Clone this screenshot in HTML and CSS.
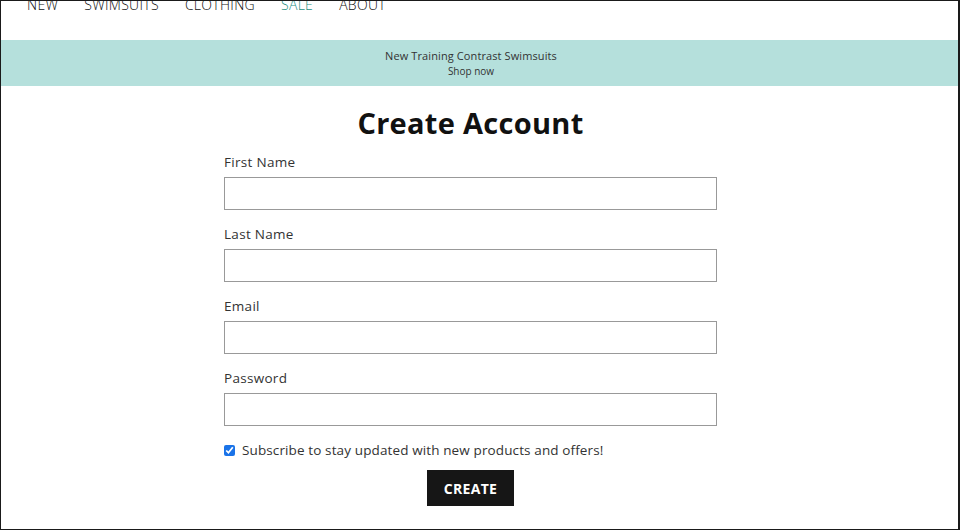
FILE: index.html
```html
<!DOCTYPE html>
<html>
<head>
<meta charset="utf-8">
<link rel="stylesheet" href="styles.css">
</head>
<body>
<div class="frame">
  <nav class="nav">
    <a class="nav-link" href="#">NEW</a>
    <a class="nav-link" href="#">SWIMSUITS</a>
    <a class="nav-link" href="#">CLOTHING</a>
    <a class="nav-link sale" href="#">SALE</a>
    <a class="nav-link" href="#">ABOUT</a>
  </nav>
  <div class="banner">
    <div class="banner-inner">
      <div class="banner-title">New Training Contrast Swimsuits</div>
      <div class="banner-link">Shop now</div>
    </div>
  </div>
  <div class="page">
    <main class="main">
      <h1 class="title">Create Account</h1>
      <form class="form">
        <label class="field">
          <span class="label">First Name</span>
          <input class="input" type="text">
        </label>
        <label class="field">
          <span class="label">Last Name</span>
          <input class="input" type="text">
        </label>
        <label class="field">
          <span class="label">Email</span>
          <input class="input" type="email">
        </label>
        <label class="field">
          <span class="label">Password</span>
          <input class="input" type="password">
        </label>
        <label class="check">
          <input class="checkbox" type="checkbox" checked>
          <span>Subscribe to stay updated with new products and offers!</span>
        </label>
        <div class="actions">
          <button class="btn" type="button">CREATE</button>
        </div>
      </form>
    </main>
  </div>
</div>
</body>
</html>
```
FILE: styles.css
```css
html, body {
  margin: 0;
  padding: 0;
  background: #fff;
}
body {
  font-family: "Open Sans", "DejaVu Sans", sans-serif;
  color: #222;
}
.frame {
  width: 960px;
  height: 530px;
  box-sizing: border-box;
  border: 1px solid #1a1a1a;
  border-right-width: 2px;
  overflow: hidden;
}
.nav {
  display: flex;
  gap: 26px;
  padding-left: 26px;
  height: 50px;
  margin-top: -11px;
  align-items: flex-start;
}
.nav-link {
  font-size: 14px;
  line-height: 30px;
  color: #111;
  text-decoration: none;
  letter-spacing: 0.3px;
  font-weight: 300;
}
.nav-link.sale {
  color: #24907f;
}
.banner {
  background: #b5e0dc;
  height: 46px;
  box-sizing: border-box;
  padding-top: 8px;
  color: #333;
}
.banner-inner {
  width: 940px;
  text-align: center;
}
.banner-title {
  font-size: 11px;
  line-height: 15px;
  letter-spacing: 0.1px;
}
.banner-link {
  font-size: 10px;
  line-height: 16px;
}
.page {
  width: 939px;
  display: flex;
  justify-content: center;
}
.main {
  width: 493px;
}
.title {
  margin: 19px 0 12px;
  text-align: center;
  font-size: 29px;
  line-height: 36px;
  font-weight: 700;
  letter-spacing: 0.3px;
  color: #111;
}
.form {
  display: flex;
  flex-direction: column;
}
.field {
  display: flex;
  flex-direction: column;
  margin-bottom: 15px;
}
.label {
  font-size: 13.5px;
  line-height: 18px;
  letter-spacing: 0.3px;
  color: #333;
  margin-bottom: 6px;
}
.input {
  height: 33px;
  box-sizing: border-box;
  border: 1px solid #999;
  border-radius: 0;
  margin: 0;
}
.check {
  display: flex;
  align-items: center;
  gap: 7px;
  font-size: 13.5px;
  letter-spacing: 0.12px;
  color: #333;
  margin-top: 0;
}
.checkbox {
  margin: 0;
  width: 11px;
  height: 11px;
  accent-color: #1a73e8;
}
.actions {
  display: flex;
  justify-content: center;
  margin-top: 11px;
}
.btn {
  width: 87px;
  height: 36px;
  background: #161616;
  color: #fff;
  border: none;
  font-family: inherit;
  font-weight: 700;
  font-size: 14px;
  letter-spacing: 0.3px;
}
```
